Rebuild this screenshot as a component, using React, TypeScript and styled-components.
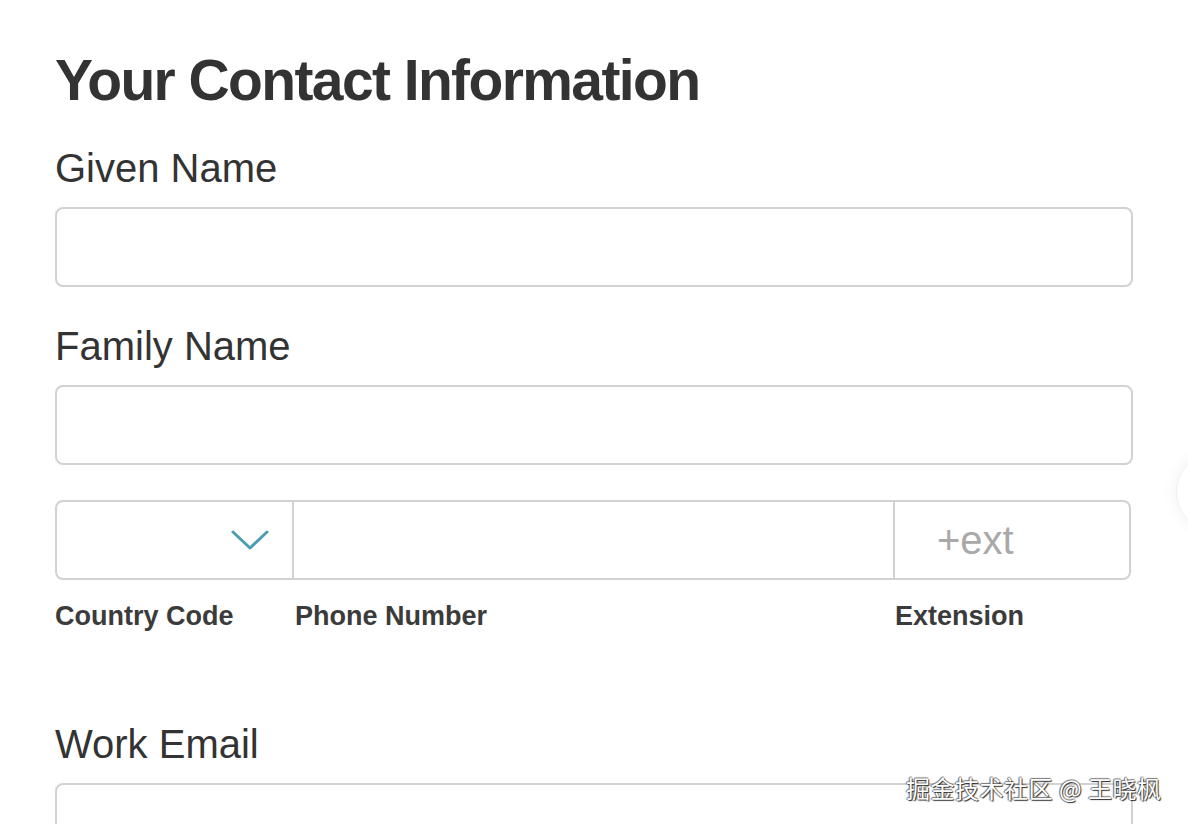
import React from "react";
import styled, { createGlobalStyle } from "styled-components";

const Global = createGlobalStyle`
  html, body { margin: 0; padding: 0; background: #ffffff; }
  body { font-family: "Liberation Sans", Arial, Helvetica, sans-serif; color: #333333; overflow: hidden; }
  * { box-sizing: border-box; }
`;

const Page = styled.div`
  position: relative;
  width: 1188px;
  height: 824px;
  overflow: hidden;
  padding: 48px 55px 0 55px;
`;

const Title = styled.h1`
  margin: 0;
  font-size: 57px;
  line-height: 64px;
  font-weight: 700;
  letter-spacing: -1.6px;
  color: #333333;
`;

const Form = styled.form`
  display: flex;
  flex-direction: column;
`;

const Field = styled.div<{ $top: number }>`
  display: flex;
  flex-direction: column;
  margin-top: ${(p) => p.$top}px;
`;

const Label = styled.label`
  font-size: 40px;
  line-height: 48px;
  font-weight: 400;
  color: #333333;
  margin-bottom: 15px;
`;

const TextInput = styled.input`
  width: 100%;
  height: 80px;
  border: 2px solid #d2d2d2;
  border-radius: 8px;
  background: #ffffff;
  font-family: inherit;
  font-size: 36px;
  padding: 0 20px;
  outline: none;
`;

const PhoneBox = styled.div`
  display: grid;
  grid-template-columns: 235px 601px 1fr;
  width: 1076px;
  height: 80px;
  border: 2px solid #d2d2d2;
  border-radius: 8px;
  overflow: hidden;
`;

const Segment = styled.div<{ $divider?: boolean }>`
  display: flex;
  align-items: center;
  border-left: ${(p) => (p.$divider ? "2px solid #d2d2d2" : "none")};
`;

const SelectSegment = styled(Segment)`
  justify-content: flex-end;
  padding-right: 22px;
`;

const ExtInput = styled.input`
  width: 100%;
  height: 100%;
  border: none;
  outline: none;
  background: transparent;
  font-family: inherit;
  font-size: 40px;
  padding: 0 0 0 42px;
  color: #333;
  &::placeholder { color: #a9a9a9; }
`;

const PhoneInput = styled(ExtInput)`
  padding-left: 20px;
`;

const SubLabels = styled.div`
  display: grid;
  grid-template-columns: 240px 600px 1fr;
  width: 1076px;
  margin-top: 20px;
`;

const SubLabel = styled.span<{ $indent?: number }>`
  font-size: 27px;
  line-height: 32px;
  font-weight: 700;
  color: #3b3b3b;
  padding-left: ${(p) => p.$indent ?? 0}px;
`;

const Watermark = styled.div`
  position: absolute;
  left: 906px;
  top: 772px;
  font-family: "Noto Sans CJK SC", "Liberation Sans", sans-serif;
  font-size: 24px;
  line-height: 32px;
  color: #ffffff;
  letter-spacing: 0.5px;
  text-shadow: 1px 1px 1px #2a2a2a, -1px 0 1px #666, 0 -1px 1px #777;
`;

const EdgeBubble = styled.div`
  position: absolute;
  left: 1176px;
  top: 452px;
  width: 80px;
  height: 80px;
  border-radius: 50%;
  background: #ffffff;
  box-shadow: 0 0 18px rgba(0, 0, 0, 0.06);
  border: 1px solid #f0f0f0;
`;

const Chevron = () => (
  <svg width="40" height="24" viewBox="0 0 40 24" fill="none">
    <path d="M3 4 L20 20 L37 4" stroke="#4a9db2" strokeWidth="3" strokeLinecap="round" strokeLinejoin="round" />
  </svg>
);

export default function App() {
  return (
    <Page>
      <Global />
      <Title>Your Contact Information</Title>
      <Form onSubmit={(e) => e.preventDefault()}>
        <Field $top={32}>
          <Label>Given Name</Label>
          <TextInput type="text" />
        </Field>
        <Field $top={35}>
          <Label>Family Name</Label>
          <TextInput type="text" />
        </Field>
        <Field $top={35}>
          <PhoneBox>
            <SelectSegment>
              <Chevron />
            </SelectSegment>
            <Segment $divider>
              <PhoneInput type="tel" />
            </Segment>
            <Segment $divider>
              <ExtInput type="text" placeholder="+ext" />
            </Segment>
          </PhoneBox>
          <SubLabels>
            <SubLabel>Country Code</SubLabel>
            <SubLabel>Phone Number</SubLabel>
            <SubLabel>Extension</SubLabel>
          </SubLabels>
        </Field>
        <Field $top={88}>
          <Label>Work Email</Label>
          <TextInput type="email" />
        </Field>
      </Form>
      <EdgeBubble />
      <Watermark>掘金技术社区 @ 王晓枫</Watermark>
    </Page>
  );
}
